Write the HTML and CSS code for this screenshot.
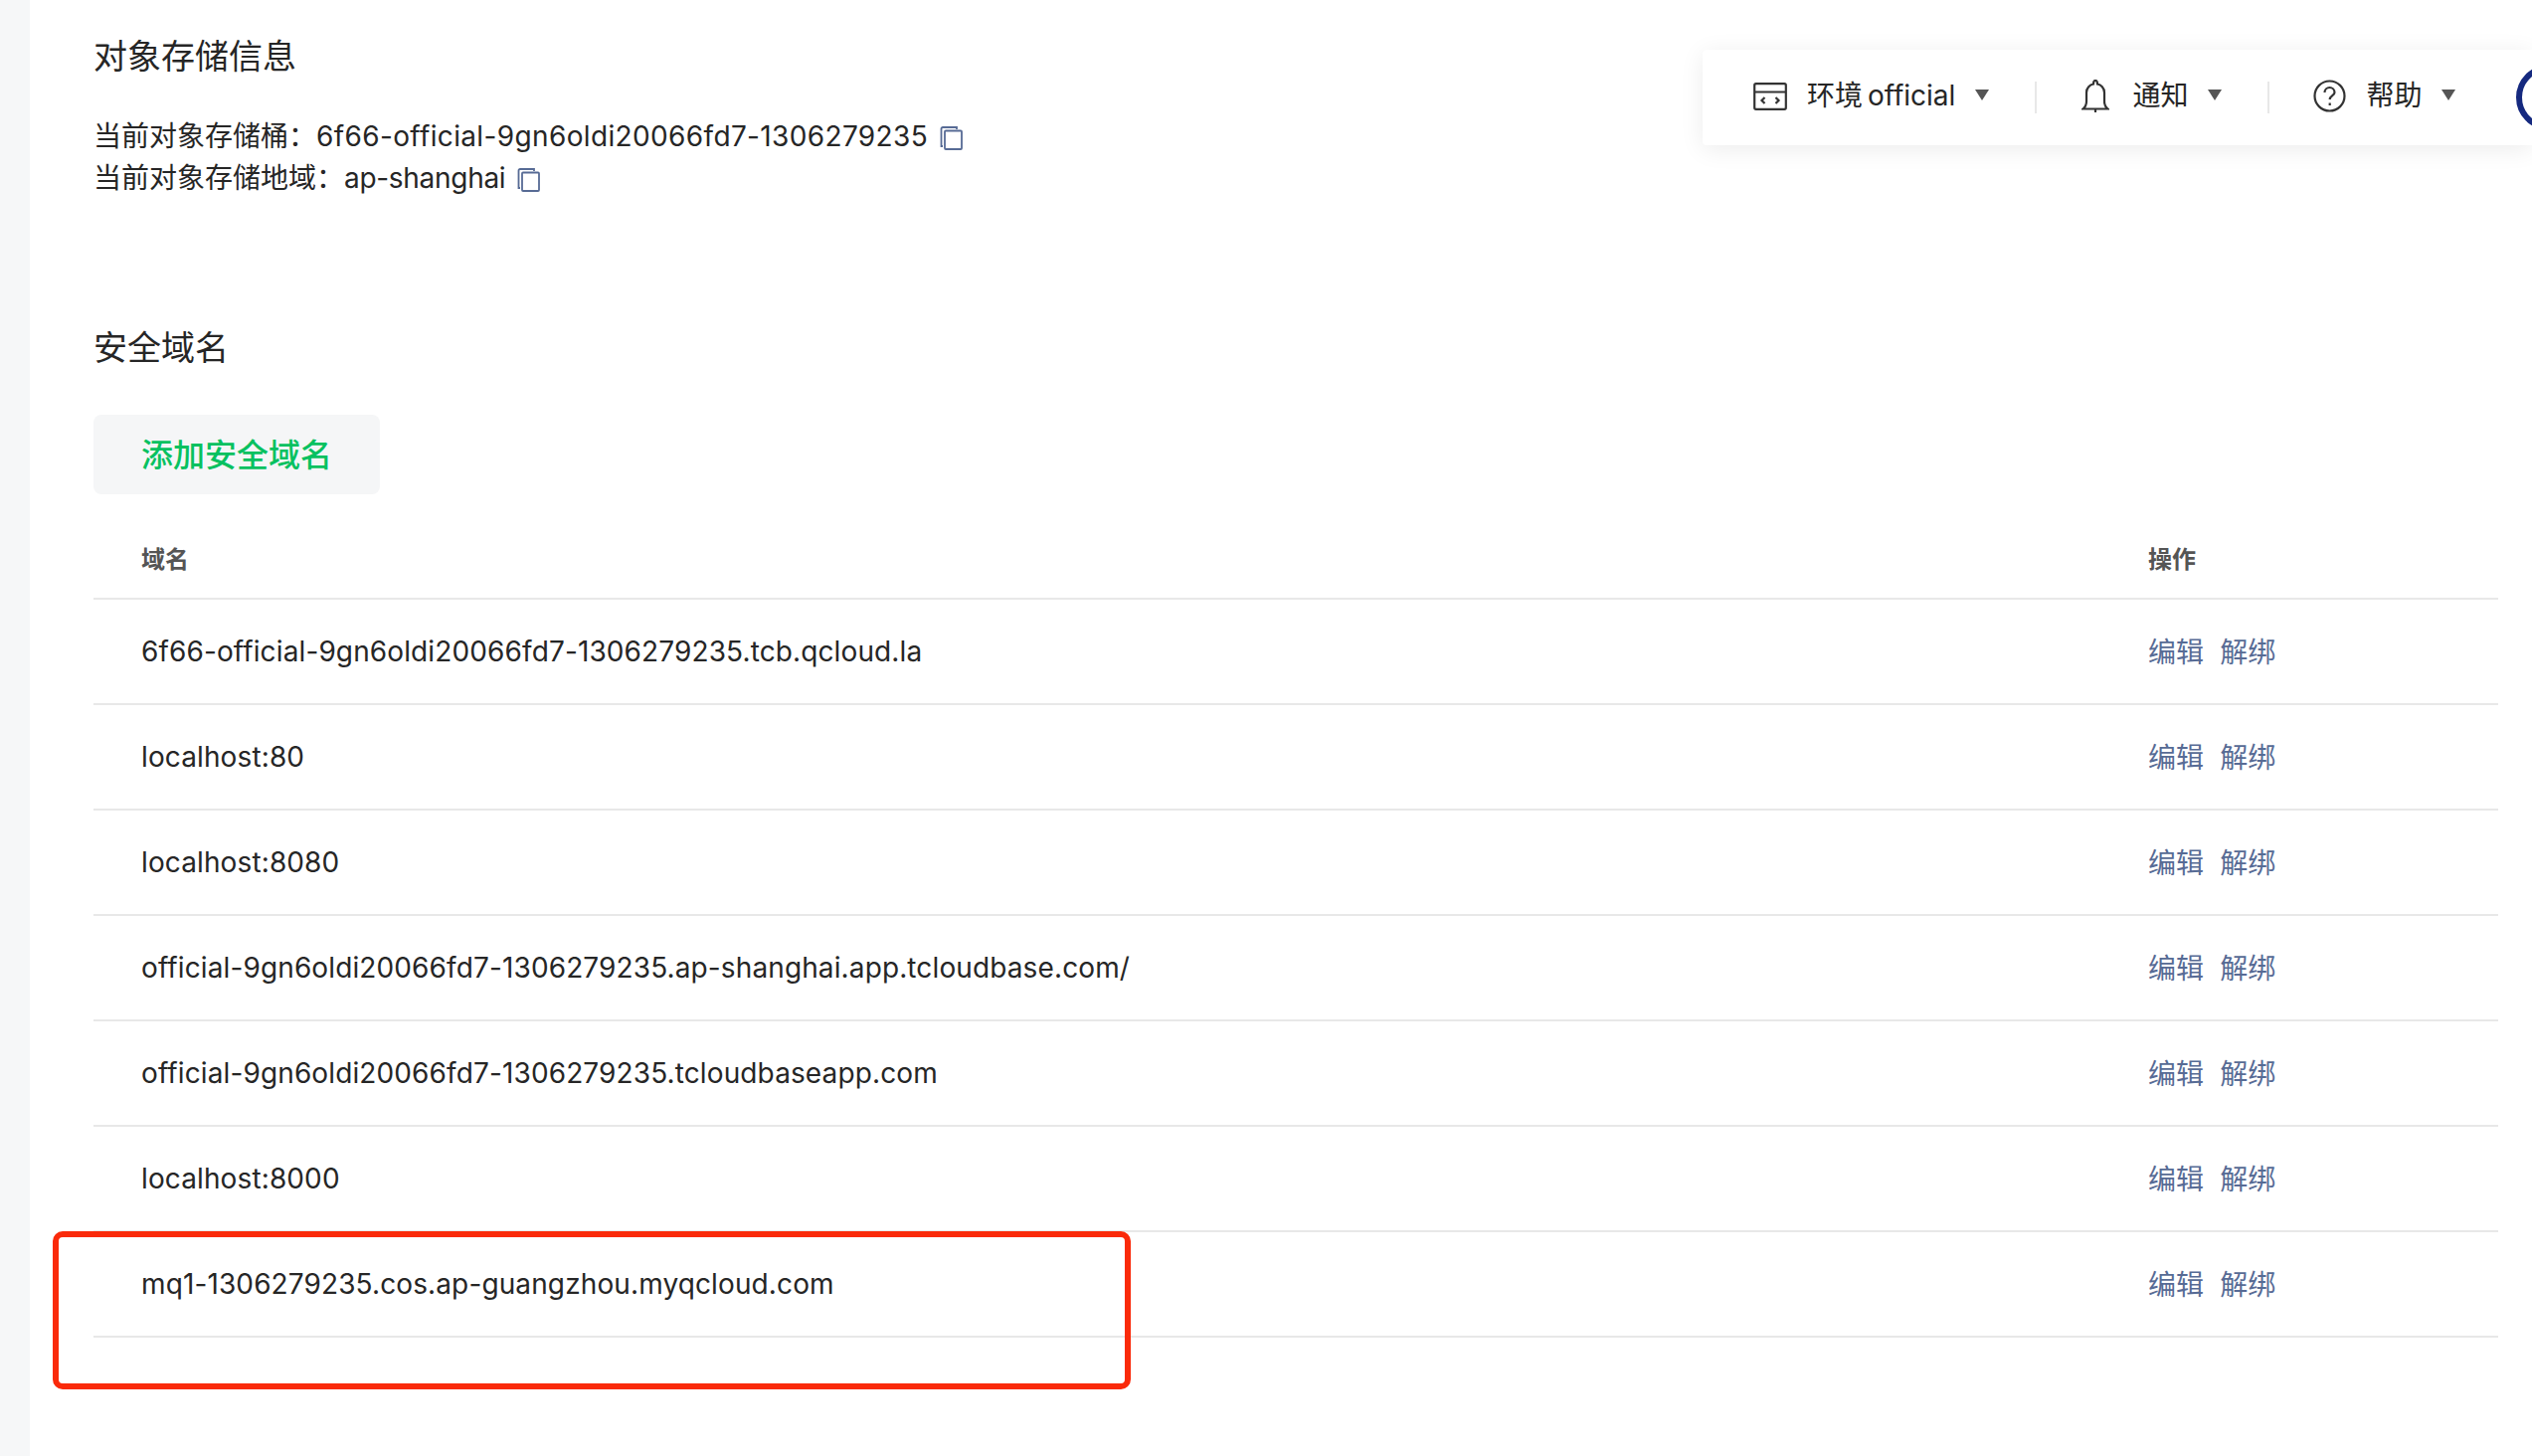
FILE: index.html
```html
<!DOCTYPE html>
<html lang="zh-CN">
<head>
    <meta charset="UTF-8">
    <title>对象存储信息</title>
    <link rel="stylesheet" href="styles.css">
</head>
<body>
    <div class="side-strip"></div>

    <main class="content">
        <h2 class="section-title">对象存储信息</h2>
        <div class="storage-info">
            <p>当前对象存储桶：<span class="bucket-name">6f66-official-9gn6oldi20066fd7-1306279235</span>
                <svg class="copy-icon" viewBox="0 0 23 24"><path d="M3 20H1.500V2.500a1.500 1.500 0 0 1 1.500-1.500h14v2"/><rect x="5" y="4.500" width="17" height="18.500" rx="1"/></svg>
            </p>
            <p>当前对象存储地域：<span class="bucket-region">ap-shanghai</span>
                <svg class="copy-icon" viewBox="0 0 23 24"><path d="M3 20H1.500V2.500a1.500 1.500 0 0 1 1.500-1.500h14v2"/><rect x="5" y="4.500" width="17" height="18.500" rx="1"/></svg>
            </p>
        </div>

        <h2 class="section-title domain-title">安全域名</h2>
        <button class="add-button">添加安全域名</button>

        <table class="domain-table">
            <thead>
                <tr><th>域名</th><th>操作</th></tr>
            </thead>
            <tbody>
                <tr><td>6f66-official-9gn6oldi20066fd7-1306279235.tcb.qcloud.la</td><td><a>编辑</a><a>解绑</a></td></tr>
                <tr><td>localhost:80</td><td><a>编辑</a><a>解绑</a></td></tr>
                <tr><td>localhost:8080</td><td><a>编辑</a><a>解绑</a></td></tr>
                <tr><td>official-9gn6oldi20066fd7-1306279235.ap-shanghai.app.tcloudbase.com/</td><td><a>编辑</a><a>解绑</a></td></tr>
                <tr><td>official-9gn6oldi20066fd7-1306279235.tcloudbaseapp.com</td><td><a>编辑</a><a>解绑</a></td></tr>
                <tr><td>localhost:8000</td><td><a>编辑</a><a>解绑</a></td></tr>
                <tr><td>mq1-1306279235.cos.ap-guangzhou.myqcloud.com</td><td><a>编辑</a><a>解绑</a></td></tr>
            </tbody>
        </table>
    </main>

    <!-- floating toolbar -->
    <div class="toolbar">
        <div class="tool-item">
            <svg class="tool-icon env-icon" viewBox="0 0 34 28"><rect x="1.200" y="1.200" width="31.600" height="25.600" rx="1.500"/><path d="M1 9.500h32M11.500 15l-3 3 3 3M22.500 15l3 3-3 3"/></svg>
            <span class="tool-label">环境 official</span>
            <i class="caret"></i>
        </div>
        <div class="tool-divider"></div>
        <div class="tool-item">
            <svg class="tool-icon bell-icon" viewBox="0 0 28 34"><path d="M1.500 29.500c2.500-2 3.500-4 3.500-7.500v-9c0-4.500 3.500-8 7-8.500 0-2 .8-3.500 2-3.500s2 1.500 2 3.500c3.500.5 7 4 7 8.500v9c0 3.500 1 5.500 3.500 7.500z"/><path d="M14 30v3"/></svg>
            <span class="tool-label">通知</span>
            <i class="caret"></i>
        </div>
        <div class="tool-divider"></div>
        <div class="tool-item">
            <svg class="tool-icon help-icon" viewBox="0 0 33 33"><circle cx="16.500" cy="16.500" r="15"/><path d="M11.500 13a5 5 0 0 1 10 0c0 3-4.800 3.500-4.800 7"/><path d="M16.700 23.500v2.500"/></svg>
            <span class="tool-label">帮助</span>
            <i class="caret"></i>
        </div>
        <div class="avatar"></div>
    </div>

    <!-- red annotation box from the screenshot -->
    <div class="highlight-box"></div>
</body>
</html>
```

FILE: styles.css
```css
body {
    margin: 0;
    background-color: #ffffff;
    color: #262626;
    font-family: Inter, "Noto Sans CJK SC", sans-serif;
    overflow: hidden;
    height: 1464px;
    position: relative;
    display: flex;
}

.side-strip {
    width: 30px;
    flex-shrink: 0;
    background-color: #f6f7f8;
}

.content {
    flex: 1;
    padding: 33px 34px 0 64px;
}

.section-title {
    margin: 0;
    font-size: 34px;
    font-weight: 400;
    line-height: 48px;
}

.storage-info {
    margin-top: 35px;
    font-size: 28px;
    line-height: 42px;
}

.storage-info p {
    margin: 0;
}

.bucket-name {
    letter-spacing: 0.36px;
}

.bucket-region {
    letter-spacing: -0.3px;
}

.copy-icon {
    width: 23px;
    height: 24px;
    margin-left: 4px;
    vertical-align: -4px;
    fill: none;
    stroke: #576b95;
    stroke-width: 1.8;
}

.domain-title {
    margin-top: 126px;
}

.add-button {
    display: block;
    width: 288px;
    height: 80px;
    margin-top: 43px;
    padding: 0 0 5px;
    border: 0;
    border-radius: 8px;
    background-color: #f5f6f7;
    color: #07c160;
    font-family: inherit;
    font-size: 32px;
    font-weight: 500;
}

.domain-table {
    width: 100%;
    border-collapse: collapse;
    table-layout: fixed;
}

.domain-table th,
.domain-table td {
    border-bottom: 2px solid #e8e8e8;
    text-align: left;
    padding: 0 0 0 48px;
}

.domain-table th:last-child,
.domain-table td:last-child {
    width: 352px;
    padding-left: 0;
}

.domain-table th {
    height: 82px;
    padding-top: 22px;
    font-size: 24px;
    font-weight: 600;
    color: #555555;
}

.domain-table td {
    height: 104px;
    font-size: 28px;
    letter-spacing: 0.12px;
}

.domain-table td:last-child {
    height: 102px;
    padding-bottom: 2px;
}

.domain-table a {
    color: #576b95;
    margin-right: 16px;
}

.toolbar {
    position: absolute;
    top: 50px;
    right: 0;
    left: 1712px;
    height: 96px;
    padding-left: 51px;
    box-sizing: border-box;
    display: flex;
    align-items: center;
    background-color: #ffffff;
    border-radius: 4px 0 0 4px;
    box-shadow: 0 4px 24px rgba(0, 0, 0, 0.08);
    font-size: 28px;
    overflow: hidden;
}

.tool-item {
    display: flex;
    align-items: center;
    flex-shrink: 0;
}

.tool-label {
    margin-top: -8px;
    word-spacing: -3px;
}

.tool-icon {
    margin-top: -3px;
    fill: none;
    stroke: #333333;
    stroke-width: 2.2;
    flex-shrink: 0;
}

.env-icon {
    width: 34px;
    height: 28px;
    margin-right: 20px;
}

.bell-icon {
    width: 28px;
    height: 34px;
    margin-left: 1px;
    margin-right: 23px;
}

.help-icon {
    width: 33px;
    height: 33px;
    margin-right: 20px;
}

.caret {
    width: 0;
    height: 0;
    margin-left: 20px;
    margin-top: -5px;
    border-left: 7.500px solid transparent;
    border-right: 7.500px solid transparent;
    border-top: 11px solid #555555;
}

.tool-divider {
    width: 2px;
    height: 32px;
    margin: 0 44px 0 46px;
    flex-shrink: 0;
    background-color: #e8e8e8;
}

.avatar {
    width: 66px;
    height: 66px;
    margin-left: 61px;
    flex-shrink: 0;
    box-sizing: border-box;
    border: 6px solid #15297f;
    border-radius: 50%;
}

.highlight-box {
    position: absolute;
    left: 53px;
    top: 1238px;
    width: 1084px;
    height: 159px;
    box-sizing: border-box;
    border: 6px solid #fa2a0a;
    border-radius: 10px;
}
```
